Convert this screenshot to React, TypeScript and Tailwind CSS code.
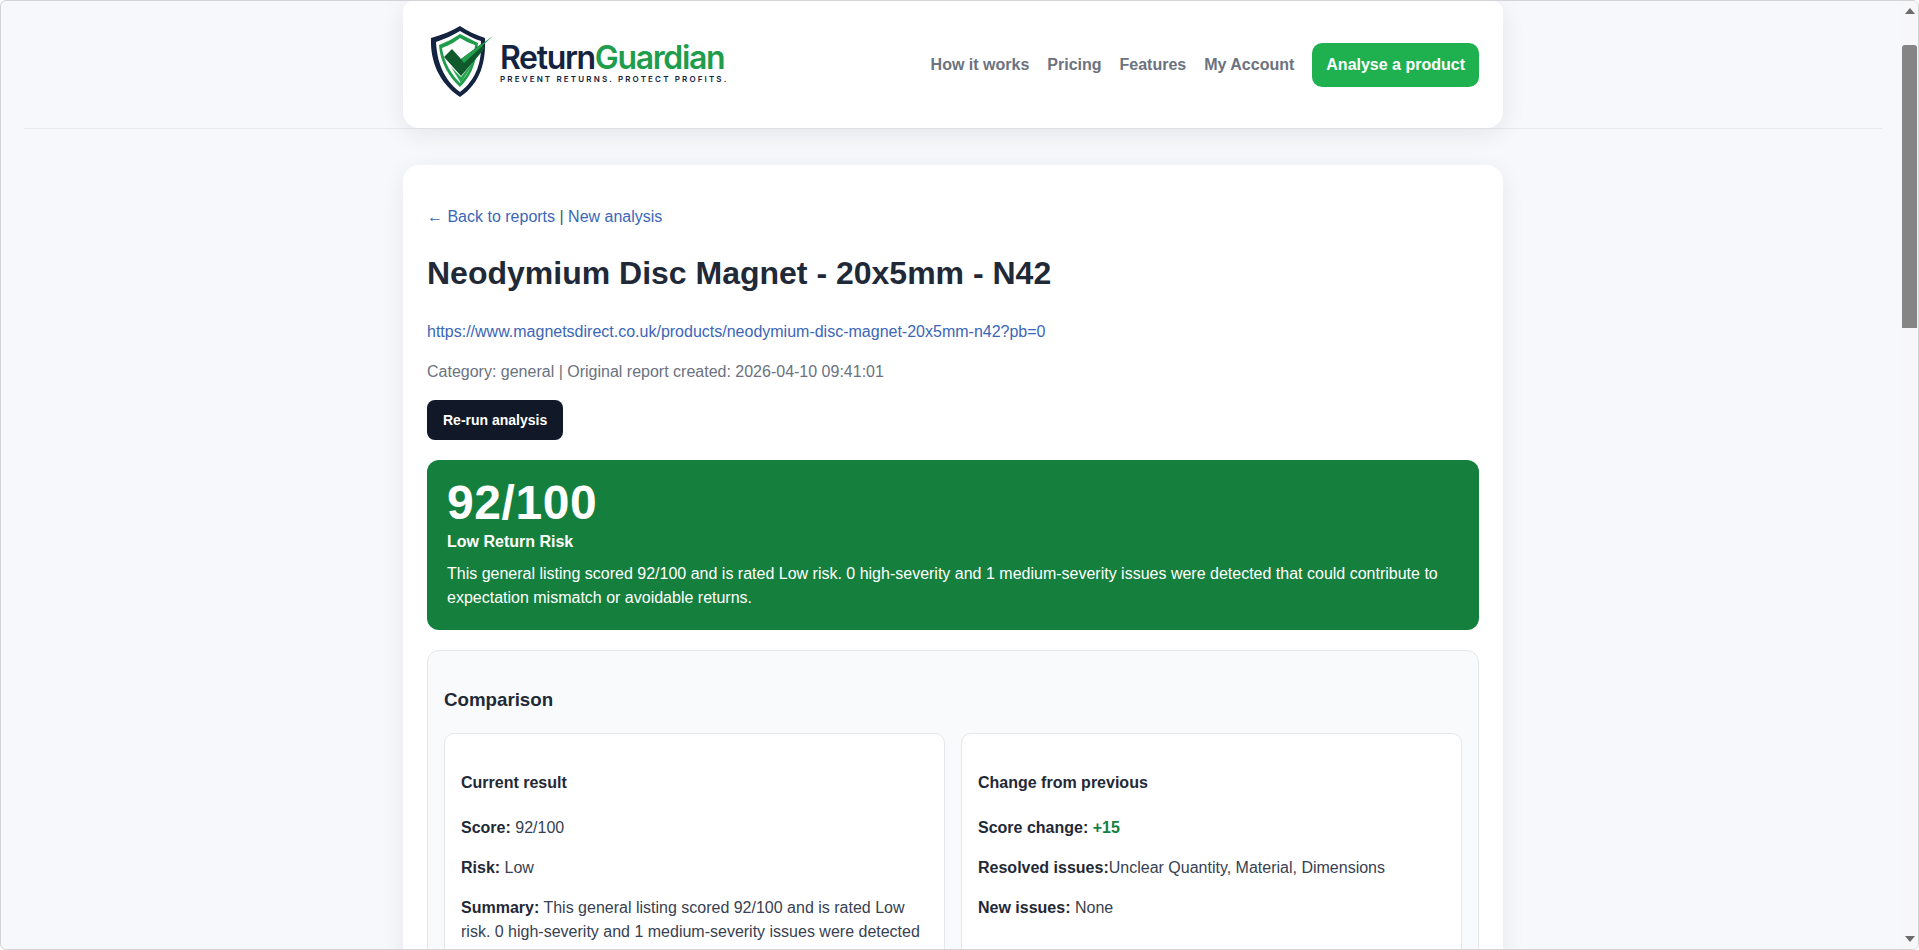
import React from 'react';

const navLinks = ['How it works', 'Pricing', 'Features', 'My Account'];

function Logo() {
  return (
    <div className="flex items-center">
      <svg width="75" height="80" viewBox="0 0 75 80" className="mb-[7px] shrink-0">
        <path d="M35 5 C42 10 51 14 60 17 C61 40 56 62 35 76 C14 62 5 40 6 17 C17 14 27 10 35 5 Z" fill="#14233f" />
        <path d="M35 10 C42 14 49 18 56 20 C57 40 52 58 35 71 C18 58 12 40 11 21 C20 18 28 14 35 10 Z" fill="#ffffff" />
        <path d="M35 13 C41 16 47 19 53 22 L52 30 C50 45 45 56 35 66 C25 57 15 42 14 24 C22 21 29 17 35 13 Z" fill="#1f9d4d" />
        <path d="M35 17 C40 20 44 22 50 24 C49 42 43 54 35 62 C27 54 19 42 17 27 C25 24 30 21 35 17 Z" fill="#ffffff" />
        <path d="M26 46 L36 62 L54 33 L36 56 Z" fill="#27a84f" />
        <path d="M19 36 L27 28 L36 38 L56 23 L60 27 L36 55 Z" fill="#0f5a2c" />
        <path d="M68 15 L36 38 L39 42 Z" fill="#23a04c" />
      </svg>
      <div className="mb-[4px] flex flex-col">
        <div className="font-['Inter',sans-serif] text-[32px] leading-[32px] font-semibold tracking-[-1.35px]">
          <span className="text-[#14233f]">Return</span>
          <span className="text-[#1f9d4d]">Guardian</span>
        </div>
        <div className="font-['Inter',sans-serif] text-[8px] leading-[10px] font-semibold tracking-[2.15px] text-[#14233f]">
          PREVENT RETURNS. PROTECT PROFITS.
        </div>
      </div>
    </div>
  );
}

function Scrollbar() {
  return (
    <div className="flex w-[17px] shrink-0 flex-col items-center bg-[#f7f7f9]">
      <div className="mt-[7px] h-0 w-0 border-x-[5px] border-b-[6px] border-x-transparent border-b-[#6b6b6b]" />
      <div className="mt-[31px] h-[283px] w-[15px] rounded-t-[3px] bg-[#858585]" />
      <div className="flex-1" />
      <div className="mb-[7px] h-0 w-0 border-x-[5px] border-t-[6px] border-x-transparent border-t-[#6b6b6b]" />
    </div>
  );
}

export default function App() {
  return (
    <div className="flex h-[950px] w-full overflow-hidden rounded-[6px] border border-[#d4d4d8] bg-[#f7f8fc] font-['Liberation_Sans',Arial,sans-serif]">
      <div className="min-w-0 flex-1 overflow-hidden pr-[19px] pl-[23px]">
        <header className="border-b border-[#e7e9ee]">
          <div className="mx-auto flex h-[127px] w-[1100px] items-center justify-between rounded-b-[16px] rounded-t-[10px] bg-white pr-6 pl-[22px] shadow-[0_6px_24px_rgba(15,23,42,0.08)]">
            <Logo />
            <nav className="flex items-center gap-[18px]">
              {navLinks.map((link) => (
                <a key={link} className="text-[16px] font-bold text-[#6b7280]">
                  {link}
                </a>
              ))}
              <a className="flex h-[44px] items-center rounded-[10px] bg-[#1fb14f] px-[14px] text-[16px] font-bold text-white">
                Analyse a product
              </a>
            </nav>
          </div>
        </header>

        <main className="mx-auto mt-[36px] w-[1100px] rounded-[16px] bg-white px-6 pt-6 shadow-[0_6px_24px_rgba(15,23,42,0.07)]">
          <p className="mt-[16px] text-[16px] leading-[24px] text-[#4b5563]">
            <a className="text-[#3b66b8]">← Back to reports</a> | <a className="text-[#3b66b8]">New analysis</a>
          </p>
          <h1 className="mt-[25px] text-[32px] leading-[38px] font-bold text-[#1f2937]">Neodymium Disc Magnet - 20x5mm - N42</h1>
          <p className="mt-[28px] text-[16px] leading-[24px]">
            <a className="text-[#3b66b8]">https://www.magnetsdirect.co.uk/products/neodymium-disc-magnet-20x5mm-n42?pb=0</a>
          </p>
          <p className="mt-[16px] text-[16px] leading-[24px] text-[#6b7280]">Category: general | Original report created: 2026-04-10 09:41:01</p>
          <button className="mt-[16px] h-[40px] rounded-[8px] bg-[#111827] px-4 text-[14px] font-bold text-white">Re-run analysis</button>

          <section className="mt-[20px] h-[170px] rounded-[12px] bg-[#15803d] px-5 pt-[17px] text-white">
            <div className="text-[48px] leading-[52px] font-bold tracking-[0.6px]">92/100</div>
            <div className="mt-[1px] text-[16px] leading-[24px] font-bold">Low Return Risk</div>
            <p className="mt-[8px] text-[16px] leading-[24px]">
              This general listing scored 92/100 and is rated Low risk. 0 high-severity and 1 medium-severity issues were detected that could contribute to expectation mismatch or avoidable returns.
            </p>
          </section>

          <section className="mt-[20px] rounded-[12px] border border-[#e5e7eb] bg-[#f9fafb] px-[16px] pt-[37px]">
            <h2 className="text-[18.72px] leading-[24px] font-bold text-[#1f2937]">Comparison</h2>
            <div className="mt-[21px] grid grid-cols-2 gap-4">
              <div className="rounded-[10px] border border-[#e5e7eb] bg-white px-4 pt-[37px] pb-4 text-[16px] leading-[24px] text-[#374151]">
                <h3 className="font-bold text-[#1f2937]">Current result</h3>
                <p className="mt-[21px]"><strong className="text-[#1f2937]">Score:</strong> 92/100</p>
                <p className="mt-[16px]"><strong className="text-[#1f2937]">Risk:</strong> Low</p>
                <p className="mt-[16px]">
                  <strong className="text-[#1f2937]">Summary:</strong> This general listing scored 92/100 and is rated Low risk. 0 high-severity and 1 medium-severity issues were detected that could contribute to expectation mismatch or avoidable returns.
                </p>
              </div>
              <div className="rounded-[10px] border border-[#e5e7eb] bg-white px-4 pt-[37px] pb-4 text-[16px] leading-[24px] text-[#374151]">
                <h3 className="font-bold text-[#1f2937]">Change from previous</h3>
                <p className="mt-[21px]"><strong className="text-[#1f2937]">Score change:</strong> <strong className="text-[#15803d]">+15</strong></p>
                <p className="mt-[16px]"><strong className="text-[#1f2937]">Resolved issues:</strong>Unclear Quantity, Material, Dimensions</p>
                <p className="mt-[16px]"><strong className="text-[#1f2937]">New issues:</strong> None</p>
              </div>
            </div>
          </section>
        </main>
      </div>
      <Scrollbar />
    </div>
  );
}
